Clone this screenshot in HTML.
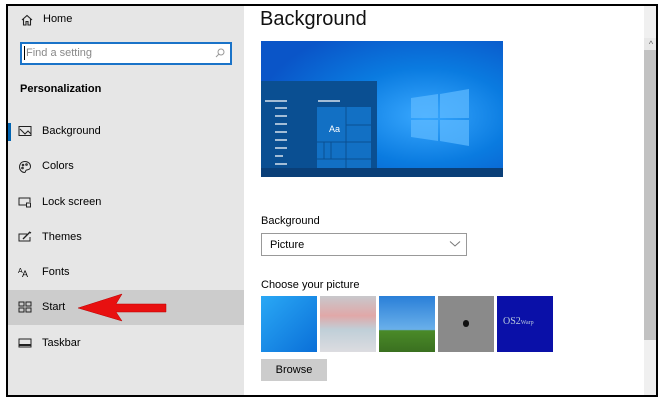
<!DOCTYPE html>
<html><head><meta charset="utf-8"><style>
*{margin:0;padding:0;box-sizing:border-box}
body{width:664px;height:400px;background:#fff;position:relative;overflow:hidden;font-family:"Liberation Sans",sans-serif;color:#000}
.frame{position:absolute;left:6px;top:4px;width:652px;height:393px;border:2px solid #000;overflow:hidden;background:#fff}
.side{position:absolute;left:0;top:0;width:236px;height:100%;background:#e6e6e6}
.t{position:absolute;font-size:11px}
.item{position:absolute;left:0;width:236px;height:35px}
.item span{position:absolute;left:34px;top:11px;font-size:11px}
.item svg{position:absolute;left:10px;top:11px}
</style></head><body>
<div class="frame">
 <div class="side">
  <svg style="position:absolute;left:13px;top:8px" width="12" height="12" viewBox="0 0 12 12" fill="none" stroke="#222" stroke-width="1.1"><path d="M1 6 L6 1.5 L11 6 M2.5 5 V11 H5 V7.5 H7 V11 H9.5 V5"/></svg>
  <div class="t" style="left:35px;top:7px">Home</div>
  <div style="position:absolute;left:12px;top:36px;width:212px;height:23px;border:2px solid #1a73c8;background:#fff"></div>
  <div style="position:absolute;left:16px;top:40px;width:1px;height:14px;background:#000"></div>
  <div class="t" style="left:18px;top:41px;color:#888">Find a setting</div>
  <svg style="position:absolute;left:207px;top:42px" width="10" height="10" viewBox="0 0 10 10" fill="none" stroke="#999"><circle cx="6" cy="4" r="3"/><path d="M4 6 L1 9"/></svg>
  <div class="t" style="left:12px;top:77px;font-weight:bold">Personalization</div>
  <div style="position:absolute;left:0;top:117px;width:3px;height:18px;background:#0063b1"></div>
  <div class="item" style="top:108px"><svg width="14" height="12" viewBox="0 0 14 12" fill="none" stroke="#222"><rect x="1" y="1.5" width="12" height="9"/><path d="M2 4 L7 9 L10 6 L13 9"/></svg><span>Background</span></div>
  <div class="item" style="top:143px"><svg width="14" height="14" viewBox="0 0 14 14" fill="none" stroke="#222"><path d="M7 1.5 C3 1.5 1.5 4.5 1.5 7 C1.5 10 4 12.5 6.5 12.5 C8 12.5 7 10.5 8.5 10 C10.5 9.5 12.5 9.5 12.5 6.5 C12.5 3.5 10 1.5 7 1.5Z"/><circle cx="5" cy="5" r=".8"/><circle cx="8.5" cy="4.5" r=".8"/><circle cx="4.5" cy="8" r=".8"/></svg><span>Colors</span></div>
  <div class="item" style="top:179px"><svg width="14" height="12" viewBox="0 0 14 12" fill="none" stroke="#222"><path d="M8 9 H1 V2 H12 V6"/><rect x="8.5" y="7" width="4" height="4"/></svg><span>Lock screen</span></div>
  <div class="item" style="top:214px"><svg width="14" height="12" viewBox="0 0 14 12" fill="none" stroke="#222"><path d="M9 3 H1 V10 H12 V6"/><path d="M5 8 L12 1 M11 1 L13 2" stroke-width="1.4"/></svg><span>Themes</span></div>
  <div class="item" style="top:249px"><svg width="14" height="12" viewBox="0 0 14 12"><text x="0" y="7" font-size="7" font-family="Liberation Sans">A</text><text x="4" y="11" font-size="9" font-family="Liberation Sans">A</text></svg><span>Fonts</span></div>
  <div class="item" style="top:284px;background:#cccccc"><svg width="14" height="12" viewBox="0 0 14 12" fill="none" stroke="#222"><rect x="1" y="1" width="5" height="4"/><rect x="8" y="1" width="5" height="4"/><rect x="1" y="7" width="5" height="4"/><rect x="8" y="7" width="5" height="4"/></svg><span>Start</span></div>
  <div class="item" style="top:320px"><svg width="14" height="12" viewBox="0 0 14 12" fill="none" stroke="#222"><rect x="1" y="2" width="12" height="8"/><path d="M1 8 H13" stroke-width="2"/></svg><span>Taskbar</span></div>
  <svg style="position:absolute;left:68px;top:286px" width="95" height="30" viewBox="0 0 95 30"><path d="M2 16 L46 2 L40 12 L90 12 L90 20 L40 20 L46 29 Z" fill="#e81010" stroke="#b00" stroke-width=".5"/></svg>
 </div>
 <div style="position:absolute;left:252px;top:2px;font-size:20px;color:#111">Background</div>
 <svg style="position:absolute;left:253px;top:35px" width="242" height="136" viewBox="0 0 242 136">
  <defs><radialGradient id="g" cx="0.68" cy="0.55" r="0.7"><stop offset="0" stop-color="#39a8ff"/><stop offset="0.5" stop-color="#0a7be0"/><stop offset="1" stop-color="#0a55c8"/></radialGradient></defs>
  <rect width="242" height="136" fill="url(#g)"/>
  <rect x="0" y="40" width="116" height="96" fill="#0a4f92"/>
  <rect x="56" y="66" width="54" height="62" fill="#1270c4"/>
  <path d="M85 66 V136 M56 101 H110 M85 84 H110 M56 118 H110 M63 101 V118 M70 101 V118" stroke="#0a4f92" stroke-width="1"/>
  <text x="68" y="91" font-size="9" fill="#fff" font-family="Liberation Sans">Aa</text>
  <path d="M4 60 H26 M57 60 H79" stroke="#fff" stroke-width="1.2"/>
  <path d="M14 67 H26 M14 75 H26 M14 83 H26 M14 91 H26 M14 99 H26 M14 107 H26 M14 115 H22 M14 123 H26" stroke="#fff" stroke-width="1.2"/>
  <path d="M150 57 L177 53 V77 H150Z M150 79 H177 V100 L150 96Z M179 53 L208 48 V77 H179Z M179 79 H208 V105 L179 100Z" fill="#5cb8ff" opacity=".75"/>
  <rect x="0" y="127" width="242" height="9" fill="#0a3f78"/>
 </svg>
 <div class="t" style="left:253px;top:209px">Background</div>
 <div style="position:absolute;left:253px;top:227px;width:206px;height:23px;border:1px solid #999;background:#fff"></div>
 <div class="t" style="left:262px;top:233px">Picture</div>
 <svg style="position:absolute;left:441px;top:234px" width="12" height="8" viewBox="0 0 12 8" fill="none" stroke="#777"><path d="M1 1.5 L6 6 L11 1.5"/></svg>
 <div class="t" style="left:253px;top:273px">Choose your picture</div>
 <div style="position:absolute;left:253px;top:290px;width:56px;height:56px;background:linear-gradient(135deg,#2aa8f5,#0a6fd8)"></div>
 <div style="position:absolute;left:312px;top:290px;width:56px;height:56px;background:linear-gradient(180deg,#c8c8cc 0%,#e0a8a8 35%,#c0cfd8 60%,#dcdce0 100%)"></div>
 <div style="position:absolute;left:371px;top:290px;width:56px;height:56px;background:linear-gradient(180deg,#2a7fd8 0%,#6ab0ea 60%,#4a8a28 62%,#3a7020 100%)"></div>
 <div style="position:absolute;left:430px;top:290px;width:56px;height:56px;background:#8a8a8a"><div style="position:absolute;left:25px;top:24px;width:6px;height:7px;border-radius:3px;background:#111"></div></div>
 <div style="position:absolute;left:489px;top:290px;width:56px;height:56px;background:#0a10a8;color:#bcd;font:10px 'Liberation Serif',serif;padding:20px 0 0 6px">OS2<span style="font-size:6px">Warp</span></div>
 <div style="position:absolute;left:253px;top:353px;width:66px;height:22px;background:#cccccc;font-size:11px;text-align:center;line-height:22px">Browse</div>
 <div style="position:absolute;left:636px;top:0;width:14px;height:389px;background:#f0f0f0"></div>
 <div style="position:absolute;left:636px;top:32px;width:14px;height:12px;background:#e8e8e8;color:#666;font-size:9px;text-align:center;line-height:12px">^</div>
 <div style="position:absolute;left:636px;top:44px;width:14px;height:290px;background:#c2c2c2"></div>
</div>
</body></html>
